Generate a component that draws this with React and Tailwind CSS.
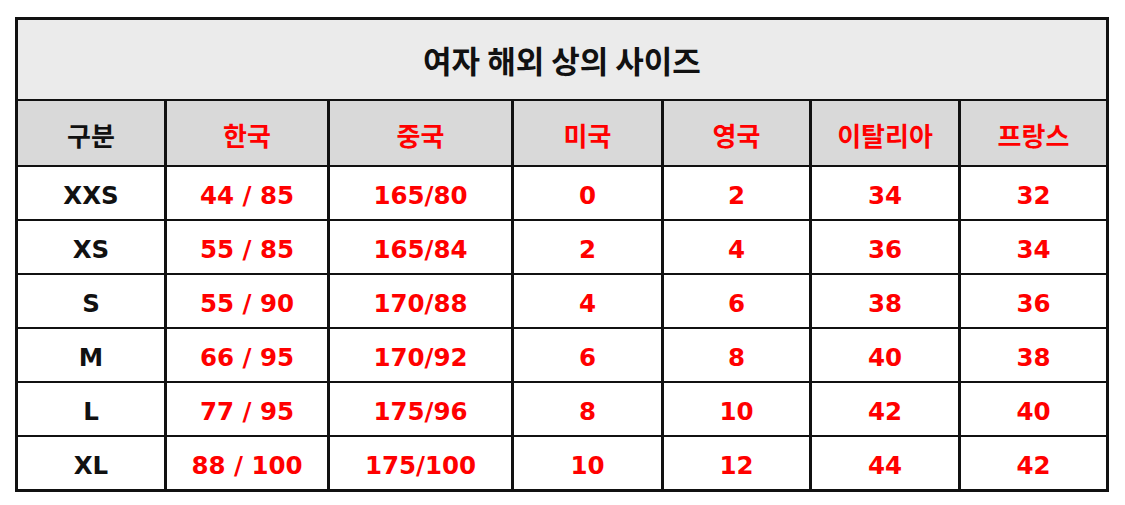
const columns = ["구분", "한국", "중국", "미국", "영국", "이탈리아", "프랑스"];

const rows = [
  ["XXS", "44 / 85", "165/80", "0", "2", "34", "32"],
  ["XS", "55 / 85", "165/84", "2", "4", "36", "34"],
  ["S", "55 / 90", "170/88", "4", "6", "38", "36"],
  ["M", "66 / 95", "170/92", "6", "8", "40", "38"],
  ["L", "77 / 95", "175/96", "8", "10", "42", "40"],
  ["XL", "88 / 100", "175/100", "10", "12", "44", "42"],
];

export default function App() {
  return (
    <div className="w-[1125px] h-[505px] bg-white pt-[17px] pl-[15px] font-['DejaVu_Sans','Noto_Sans_CJK_KR',sans-serif]">
      <div className="w-[1094px] border-[3px] border-[#111] bg-[#111] grid grid-cols-[146px_160px_181px_147px_145px_146px_145px] grid-rows-[79px_64px_repeat(6,52px)] gap-x-[3px] gap-y-[2px]">
        {/* Title */}
        <div className="col-span-7 bg-[#ebebeb] flex items-center justify-center pt-[2px] text-[31px] font-bold text-[#111] font-['Noto_Sans_CJK_KR',sans-serif]">
          여자 해외 상의 사이즈
        </div>

        {/* Header */}
        {columns.map((col, i) => (
          <div
            key={col}
            className={
              i === 0
                ? "bg-[#d9d9d9] flex items-center justify-center pt-[3px] text-[26px] font-bold text-[#111] font-['Noto_Sans_CJK_KR',sans-serif]"
                : "bg-[#d9d9d9] flex items-center justify-center pt-[3px] text-[26px] font-bold text-[#ff0000] font-['Noto_Sans_CJK_KR',sans-serif]"
            }
          >
            {col}
          </div>
        ))}

        {/* Rows */}
        {rows.map((row) =>
          row.map((cell, i) => (
            <div
              key={row[0] + i}
              className={
                i === 0
                  ? "bg-white flex items-center justify-center pt-[6px] text-[24.5px] font-bold text-[#111]"
                  : "bg-white flex items-center justify-center pt-[6px] text-[24.5px] font-bold text-[#ff0000]"
              }
            >
              {cell}
            </div>
          ))
        )}
      </div>
    </div>
  );
}
